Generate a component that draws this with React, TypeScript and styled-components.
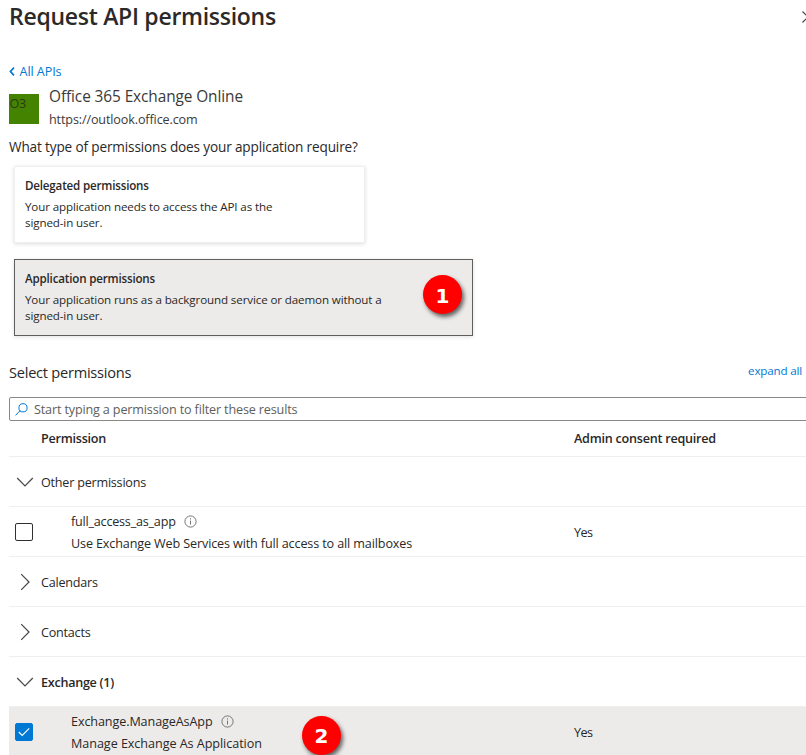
import React from 'react';
import styled, { createGlobalStyle, css } from 'styled-components';

const GlobalStyle = createGlobalStyle`
  *, *::before, *::after { box-sizing: border-box; }
  html, body { margin: 0; background: #fff; overflow: hidden; }
  body {
    font-family: 'Open Sans', 'Noto Sans', sans-serif;
    font-size: 12.6px;
    color: #292827;
  }
`;

const Page = styled.main`
  width: 806px;
  height: 755px;
  padding-left: 9px;
  display: flex;
  flex-direction: column;
  overflow: hidden;
`;

const TopBar = styled.header`
  display: flex;
  justify-content: space-between;
  align-items: center;
  height: 34px;
  flex: none;
  margin-right: -8px;
`;

const Title = styled.h1`
  margin: 0 0 2px;
  font-size: 23px;
  line-height: 32px;
  font-weight: 600;
  letter-spacing: -0.28px;
  color: #2b2a29;
`;

const CloseButton = styled.button`
  display: flex;
  flex: none;
  padding: 0;
  border: 0;
  background: none;
`;

const BackLink = styled.a`
  display: flex;
  align-items: center;
  gap: 4.5px;
  flex: none;
  height: 20px;
  margin-top: 27px;
  letter-spacing: -0.08px;
  color: #0078d4;
`;

const ApiHeader = styled.section`
  display: flex;
  flex: none;
  height: 53px;
  margin-top: 3px;
  gap: 10px;
`;

const ApiLogo = styled.div`
  width: 30px;
  height: 30px;
  margin-top: 10px;
  padding-left: 0.5px;
  background: #438300;
  line-height: 19px;
  letter-spacing: -0.2px;
  color: #2b3a1a;
`;

const ApiText = styled.div`
  padding-top: 1px;
  color: #3b3a39;
`;

const ApiName = styled.div`
  font-size: 15.4px;
  line-height: 24px;
  letter-spacing: -0.09px;
`;

const ApiUrl = styled.div`
  line-height: 22px;
  letter-spacing: -0.13px;
`;

const Question = styled.p`
  flex: none;
  margin: 0;
  font-size: 13.6px;
  line-height: 20px;
  letter-spacing: -0.15px;
`;

const Choices = styled.div`
  display: flex;
  flex-direction: column;
  align-items: flex-start;
  flex: none;
  gap: 16px;
  padding: 9px 0 0 5px;
`;

const Choice = styled.div<{ $selected?: boolean }>`
  display: flex;
  justify-content: space-between;
  align-items: center;
  width: ${p => (p.$selected ? 459 : 351)}px;
  height: 77px;
  padding: 0 10px;
  border: 1px solid ${p => (p.$selected ? '#605e5c' : '#f0efee')};
  background: ${p => (p.$selected ? '#edebe9' : '#fff')};
  box-shadow: 0 1px 4px rgba(0, 0, 0, ${p => (p.$selected ? 0.12 : 0.14)});
`;

const ChoiceText = styled.div<{ $width: number }>`
  width: ${p => p.$width}px;
  height: 58px;
  font-size: 11.6px;
  line-height: 16px;
  letter-spacing: -0.12px;
`;

const ChoiceTitle = styled.div`
  margin: 2px 0 5px;
  font-weight: 600;
  letter-spacing: -0.18px;
`;

const Marker = styled.span`
  display: flex;
  justify-content: center;
  align-items: center;
  flex: none;
  width: 39px;
  height: 39px;
  padding-top: 2px;
  border-radius: 50%;
  background: #fe0000;
  box-shadow: 2px 3px 4px rgba(0, 0, 0, 0.6);
  font: bold 20px 'DejaVu Sans', sans-serif;
  letter-spacing: 0;
  color: #fff;
`;

const ChoiceMarker = styled(Marker)`
  margin-top: -6px;
`;

const SectionHeader = styled.div`
  display: flex;
  justify-content: space-between;
  align-items: center;
  flex: none;
  height: 24px;
  margin: 24px 4px 13px 0;
`;

const SectionTitle = styled.h2`
  margin: 0;
  font-size: 14.6px;
  font-weight: 400;
  letter-spacing: -0.25px;
`;

const ExpandAll = styled.a`
  margin-top: -4px;
  font-size: 11.6px;
  letter-spacing: -0.17px;
  color: #0078d4;
`;

const SearchBox = styled.div`
  display: flex;
  align-items: center;
  flex: none;
  gap: 6px;
  height: 24px;
  margin-right: -6px;
  padding: 0 5px;
  border: 1px solid #8a8886;
  border-radius: 2px;
  letter-spacing: -0.15px;
  color: #605e5c;
`;

const rowBorder = css`
  border-bottom: 1px solid #f0efee;
`;

const TableHead = styled.div`
  display: grid;
  grid-template-columns: 533px 1fr;
  align-items: center;
  flex: none;
  height: 36px;
  padding-left: 32px;
  font-weight: 600;
  letter-spacing: -0.24px;
  ${rowBorder}
`;

const GroupRow = styled.div<{ $bold?: boolean }>`
  display: grid;
  grid-template-columns: 32px 1fr;
  align-items: center;
  flex: none;
  height: 50px;
  font-weight: ${p => (p.$bold ? 600 : 400)};
  letter-spacing: ${p => (p.$bold ? -0.27 : -0.22)}px;
  ${rowBorder}
`;

const GroupLabel = styled.span`
  padding-top: 2px;
`;

const ChevronCell = styled.span`
  display: flex;
  justify-content: center;
`;

const PermissionRow = styled.div<{ $selected?: boolean }>`
  display: grid;
  grid-template-columns: 62px 503px 1fr;
  align-items: center;
  flex: none;
  height: 50px;
  background: ${p => (p.$selected ? '#edebe9' : '#fff')};
  ${rowBorder}
`;

const CheckBox = styled.span<{ $checked?: boolean }>`
  display: flex;
  justify-content: center;
  align-items: center;
  width: 18px;
  height: 18px;
  margin-left: 6px;
  border: 1px solid ${p => (p.$checked ? '#0078d4' : '#323130')};
  border-radius: 2px;
  background: ${p => (p.$checked ? '#0078d4' : '#fff')};
`;

const PermissionInfo = styled.div`
  display: flex;
  align-items: flex-start;
  gap: 40px;
  height: 42px;
`;

const PermissionName = styled.div<{ $tracking: number }>`
  display: flex;
  align-items: center;
  gap: 8px;
  height: 22px;
  letter-spacing: ${p => p.$tracking}px;
`;

const PermissionDescription = styled.div<{ $tracking: number }>`
  line-height: 22px;
  letter-spacing: ${p => p.$tracking}px;
`;

const RowMarker = styled(Marker)`
  margin-top: 5px;
`;

const Consent = styled.span`
  padding-top: 2px;
  letter-spacing: -0.5px;
`;

const CloseIcon = () => (
  <svg width="12" height="12" viewBox="0 0 12 12" fill="none" stroke="#484644" strokeWidth="1.2">
    <path d="M.5.5l11 11M11.5.5l-11 11" />
  </svg>
);

const BackIcon = () => (
  <svg width="6" height="9" viewBox="0 0 6 9" fill="none" stroke="#0078d4" strokeWidth="1.7">
    <path d="M5 .6L1.4 4.5 5 8.4" />
  </svg>
);

const SearchIcon = () => (
  <svg width="13" height="13" viewBox="0 0 13 13" fill="none" stroke="#0078d4" strokeWidth="1">
    <circle cx="8" cy="4.8" r="4.1" />
    <path d="M5.1 7.7L.5 12.4" />
  </svg>
);

const Chevron = ({ open }: { open?: boolean }) => (
  <svg width="18" height="18" viewBox="0 0 18 18" fill="none" stroke="#484644" strokeWidth="1.2">
    <path d={open ? 'M1.2 5L9 12.8 16.8 5' : 'M5.2 1.2L13 9l-7.8 7.8'} />
  </svg>
);

const InfoIcon = () => (
  <svg width="13" height="13" viewBox="0 0 13 13" fill="none" stroke="#777573" strokeWidth="1">
    <circle cx="6.5" cy="6.5" r="5.6" />
    <path d="M6.5 5.6v4M6.5 3.3v1.2" />
  </svg>
);

const CheckIcon = () => (
  <svg width="12" height="10" viewBox="0 0 12 10" fill="none" stroke="#fff" strokeWidth="1.1">
    <path d="M.8 5l3.4 3.4L11.2 1.4" />
  </svg>
);

interface PermissionProps {
  name: string;
  description: string;
  nameTracking: number;
  descriptionTracking: number;
  checked?: boolean;
  marker?: string;
}

const Permission = ({ name, description, nameTracking, descriptionTracking, checked, marker }: PermissionProps) => (
  <PermissionRow $selected={checked}>
    <CheckBox $checked={checked}>{checked && <CheckIcon />}</CheckBox>
    <PermissionInfo>
      <div>
        <PermissionName $tracking={nameTracking}>
          {name}
          <InfoIcon />
        </PermissionName>
        <PermissionDescription $tracking={descriptionTracking}>{description}</PermissionDescription>
      </div>
      {marker && <RowMarker>{marker}</RowMarker>}
    </PermissionInfo>
    <Consent>Yes</Consent>
  </PermissionRow>
);

const Group = ({ label, open, bold }: { label: string; open?: boolean; bold?: boolean }) => (
  <GroupRow $bold={bold}>
    <ChevronCell>
      <Chevron open={open} />
    </ChevronCell>
    <GroupLabel>{label}</GroupLabel>
  </GroupRow>
);

export default function App() {
  return (
    <>
      <GlobalStyle />
      <Page>
        <TopBar>
          <Title>Request API permissions</Title>
          <CloseButton aria-label="Close">
            <CloseIcon />
          </CloseButton>
        </TopBar>
        <BackLink>
          <BackIcon />
          All APIs
        </BackLink>
        <ApiHeader>
          <ApiLogo>O3</ApiLogo>
          <ApiText>
            <ApiName>Office 365 Exchange Online</ApiName>
            <ApiUrl>https://outlook.office.com</ApiUrl>
          </ApiText>
        </ApiHeader>
        <Question>What type of permissions does your application require?</Question>
        <Choices>
          <Choice>
            <ChoiceText $width={256}>
              <ChoiceTitle>Delegated permissions</ChoiceTitle>
              Your application needs to access the API as the signed-in user.
            </ChoiceText>
          </Choice>
          <Choice $selected>
            <ChoiceText $width={366}>
              <ChoiceTitle>Application permissions</ChoiceTitle>
              Your application runs as a background service or daemon without a signed-in user.
            </ChoiceText>
            <ChoiceMarker>1</ChoiceMarker>
          </Choice>
        </Choices>
        <SectionHeader>
          <SectionTitle>Select permissions</SectionTitle>
          <ExpandAll>expand all</ExpandAll>
        </SectionHeader>
        <SearchBox>
          <SearchIcon />
          Start typing a permission to filter these results
        </SearchBox>
        <TableHead>
          <span>Permission</span>
          <span>Admin consent required</span>
        </TableHead>
        <Group label="Other permissions" open />
        <Permission
          name="full_access_as_app"
          description="Use Exchange Web Services with full access to all mailboxes"
          nameTracking={-0.21}
          descriptionTracking={-0.13}
        />
        <Group label="Calendars" />
        <Group label="Contacts" />
        <Group label="Exchange (1)" open bold />
        <Permission
          name="Exchange.ManageAsApp"
          description="Manage Exchange As Application"
          nameTracking={-0.1}
          descriptionTracking={-0.05}
          checked
          marker="2"
        />
      </Page>
    </>
  );
}
